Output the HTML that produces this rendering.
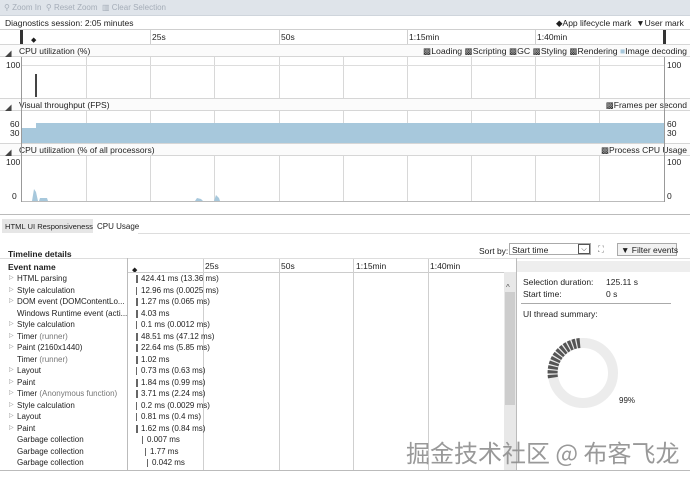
<!DOCTYPE html>
<html><head><meta charset="utf-8"><style>
*{margin:0;padding:0;box-sizing:border-box}
body{width:690px;height:480px;overflow:hidden;background:#fff;font-family:"Liberation Sans",sans-serif;font-size:8.5px;color:#1e1e1e;position:relative}
.a{position:absolute;white-space:nowrap}
.vl{position:absolute;width:1px;background:#cfcfcf}
.hl{position:absolute;height:1px;background:#cfcfcf}
.hdr{position:absolute;left:0;width:690px;height:13px;border-top:1px solid #d6d6d6;border-bottom:1px solid #d6d6d6;background:#fbfbfb;z-index:2}
.hdr span{position:absolute;top:1px;font-size:8.5px;white-space:nowrap}
.hdr .r{right:3px;left:auto}
.tri{left:5px;font-size:6px;top:3px!important;color:#444}
.row{position:absolute;left:0;height:11.5px;font-size:8px;line-height:11.5px;white-space:nowrap}
</style></head><body>
<div class="a" style="left:0;top:0;width:690px;height:16px;background:#dfe4ea;border-bottom:1px solid #cfd5dc"></div>
<div class="a" style="left:4px;top:3px;color:#a5adb8;font-size:8px">⚲ Zoom In &nbsp;⚲ Reset Zoom &nbsp;▥ Clear Selection</div>
<div class="a" style="left:5px;top:18px;font-size:8.5px">Diagnostics session: 2:05 minutes</div>
<div class="a" style="left:556px;top:18px;font-size:8.5px">◆App lifecycle mark &nbsp;▼User mark</div>
<div class="hl" style="left:0;top:29px;width:690px"></div>
<div class="a" style="left:20px;top:30px;width:3px;height:14px;background:#333"></div>
<div class="a" style="left:31px;top:36px;font-size:7px">◆</div>
<div class="a" style="left:663px;top:30px;width:3px;height:14px;background:#333"></div>
<div class="a" style="left:152px;top:32px">25s</div>
<div class="a" style="left:281px;top:32px">50s</div>
<div class="a" style="left:409px;top:32px">1:15min</div>
<div class="a" style="left:537px;top:32px">1:40min</div>
<div class="vl" style="left:150px;top:30px;height:14px"></div><div class="vl" style="left:279px;top:30px;height:14px"></div><div class="vl" style="left:407px;top:30px;height:14px"></div><div class="vl" style="left:535px;top:30px;height:14px"></div>
<div id="g"></div>
<div class="hdr" style="top:44px"><span class="tri">◢</span><span style="left:19px">CPU utilization (%)</span><span class="r" style="font-size:8.7px">▩Loading ▩Scripting ▩GC ▩Styling ▩Rendering <span style="position:static;color:#a7c8dc">■</span>Image decoding</span></div>
<div class="a" style="left:6px;top:60px">100</div><div class="a" style="left:667px;top:60px">100</div>
<div class="hl" style="left:21px;top:65px;width:643px;background:#ddd"></div>
<div class="a" style="left:35px;top:74px;width:2px;height:23px;background:#444"></div>
<div class="hdr" style="top:98px"><span class="tri">◢</span><span style="left:19px">Visual throughput (FPS)</span><span class="r">▩Frames per second</span></div>
<div class="a" style="left:21px;top:123px;width:643px;height:20px;background:#a7c8dc"></div>
<div class="a" style="left:21px;top:123px;width:15px;height:5px;background:#fff"></div>
<div class="a" style="left:10px;top:119px">60</div><div class="a" style="left:10px;top:128px">30</div>
<div class="a" style="left:667px;top:119px">60</div><div class="a" style="left:667px;top:128px">30</div>
<div class="hdr" style="top:143px"><span class="tri">◢</span><span style="left:19px">CPU utilization (% of all processors)</span><span class="r">▩Process CPU Usage</span></div>
<div class="a" style="left:6px;top:157px">100</div><div class="a" style="left:667px;top:157px">100</div>
<div class="a" style="left:12px;top:191px">0</div><div class="a" style="left:667px;top:191px">0</div>
<div class="hl" style="left:21px;top:201px;width:643px;background:#bbb"></div>
<svg class="a" style="left:21px;top:180px" width="643" height="21"><path d="M11 21 L13 9 L15 12 L17 21 Z M18 21 L19 18 L26 18 L27 21Z M174 21 L176 18 L180 19 L182 21Z M193 21 L195 15 L198 18 L199 21Z" fill="#a7c8dc"/></svg>
<div class="vl" style="left:21px;top:57px;height:145px;background:#999;z-index:3"></div>
<div class="vl" style="left:664px;top:57px;height:145px;background:#999;z-index:3"></div>
<div class="hl" style="left:0;top:214px;width:690px;background:#bbb"></div>
<div class="a" style="left:2px;top:219px;width:91px;height:14px;background:#e6e6e6"></div>
<div class="a" style="left:5px;top:222px;font-size:7.6px">HTML UI Responsiveness</div>
<div class="a" style="left:97px;top:222px;font-size:8px">CPU Usage</div>
<div class="hl" style="left:138px;top:233px;width:552px;background:#ddd"></div>
<div class="a" style="left:8px;top:249px;font-weight:bold">Timeline details</div>
<div class="a" style="left:479px;top:246px">Sort by:</div>
<div class="a" style="left:509px;top:243px;width:82px;height:12px;border:1px solid #aaa"></div>
<div class="a" style="left:512px;top:245px">Start time</div>
<div class="a" style="left:578px;top:244px;width:12px;height:10px;border:1px solid #555;font-size:7px;text-align:center;line-height:9px">⌵</div>
<div class="a" style="left:598px;top:244px;color:#666">⛶</div>
<div class="a" style="left:617px;top:243px;width:60px;height:13px;border:1px solid #aaa;background:#f2f2f2"></div>
<div class="a" style="left:621px;top:245px">▼ Filter events</div>
<div class="hl" style="left:0;top:258px;width:690px;background:#ddd"></div>
<div class="a" style="left:8px;top:262px;font-weight:bold">Event name</div>
<div class="vl" style="left:127px;top:258px;height:212px;background:#bbb"></div>
<div class="a" style="left:132px;top:266px;font-size:7px">◆</div>
<div class="a" style="left:205px;top:261px">25s</div><div class="a" style="left:281px;top:261px">50s</div>
<div class="a" style="left:356px;top:261px">1:15min</div><div class="a" style="left:430px;top:261px">1:40min</div>
<div class="hl" style="left:128px;top:272px;width:376px;background:#ccc"></div>
<div class="vl" style="left:203px;top:259px;height:211px"></div><div class="vl" style="left:279px;top:259px;height:211px"></div>
<div class="vl" style="left:353px;top:259px;height:211px"></div><div class="vl" style="left:428px;top:259px;height:211px"></div>
<div class="a" style="left:504px;top:272px;width:12px;height:198px;background:#e8e8e8"></div>
<div class="a" style="left:506px;top:283px;font-size:8px;color:#555">^</div>
<div class="a" style="left:505px;top:292px;width:10px;height:113px;background:#cdcdcd"></div>
<div class="vl" style="left:516px;top:258px;height:212px;background:#bbb"></div>
<div class="a" style="left:517px;top:261px;width:173px;height:11px;background:#eee"></div>
<div class="a" style="left:523px;top:277px">Selection duration:</div><div class="a" style="left:606px;top:277px">125.11 s</div>
<div class="a" style="left:523px;top:289px">Start time:</div><div class="a" style="left:606px;top:289px">0 s</div>
<div class="hl" style="left:521px;top:303px;width:150px;background:#aaa"></div>
<div class="a" style="left:523px;top:309px">UI thread summary:</div>
<svg class="a" style="left:543px;top:333px" width="80" height="80"><circle cx="40" cy="40" r="30" fill="none" stroke="#ececec" stroke-width="10"/>
<path d="M37 10 A30 30 0 0 0 10 45" fill="none" stroke="#555" stroke-width="10" stroke-dasharray="3 1.2"/></svg>
<div class="a" style="left:619px;top:396px;font-size:8px">99%</div>
<div id="rows"></div>
<div class="hl" style="left:0;top:470px;width:690px;background:#bbb"></div>
<div class="a" style="left:406px;top:434px;font-family:'Noto Sans CJK SC',sans-serif;font-size:24px;color:#888;opacity:.85">掘金技术社区 @ 布客飞龙</div>
<script>
var g='';[86,150,214,279,343,407,471,535,599].forEach(function(x){[[57,41],[111,32],[156,46]].forEach(function(s){g+='<div class="vl" style="left:'+x+'px;top:'+s[0]+'px;height:'+s[1]+'px;background:#d8d8d8"></div>'})});
document.getElementById('g').innerHTML=g;
var r=[["▷","HTML parsing","424.41 ms (13.36 ms)",0,2],["▷","Style calculation","12.96 ms (0.0025 ms)",0,1],["▷","DOM event (DOMContentLo...","1.27 ms (0.065 ms)",0,2],["","Windows Runtime event (acti...","4.03 ms",0,2],["▷","Style calculation","0.1 ms (0.0012 ms)",0,1],["▷","Timer <span style=color:#777>(runner)</span>","48.51 ms (47.12 ms)",0,2],["▷","Paint (2160x1440)","22.64 ms (5.85 ms)",0,2],["","Timer <span style=color:#777>(runner)</span>","1.02 ms",0,2],["▷","Layout","0.73 ms (0.63 ms)",0,1],["▷","Paint","1.84 ms (0.99 ms)",0,2],["▷","Timer <span style=color:#777>(Anonymous function)</span>","3.71 ms (2.24 ms)",0,2],["▷","Style calculation","0.2 ms (0.0029 ms)",0,1],["▷","Layout","0.81 ms (0.4 ms)",0,1],["▷","Paint","1.62 ms (0.84 ms)",0,2],["","Garbage collection","0.007 ms",6,1],["","Garbage collection","1.77 ms",9,1],["","Garbage collection","0.042 ms",11,1]];
var h='';r.forEach(function(e,i){var y=273+i*11.5;h+='<div class="row" style="top:'+y+'px;left:9px;color:#888;font-size:6px">'+e[0]+'</div><div class="row" style="top:'+y+'px;left:17px">'+e[1]+'</div><div class="a" style="left:'+(136+e[3])+'px;top:'+(y+2)+'px;width:'+e[4]+'px;height:8px;background:#666"></div><div class="row" style="top:'+y+'px;left:'+(141+e[3])+'px">'+e[2]+'</div>'});
document.getElementById('rows').innerHTML=h;
</script>
</body></html>
